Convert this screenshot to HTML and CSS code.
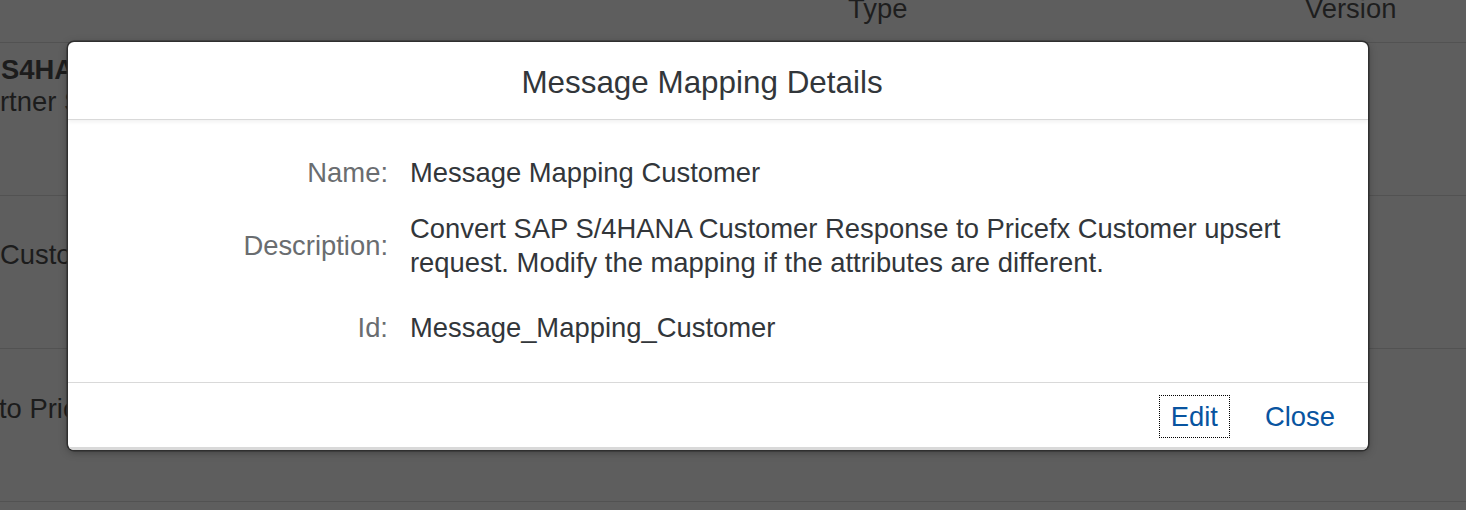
FILE: index.html
```html
<!DOCTYPE html>
<html lang="en">
<head>
<meta charset="utf-8">
<title>Message Mapping Details</title>
<link rel="stylesheet" href="styles.css">
</head>
<body>
<div class="page">
  <div class="table-head">
    <div class="th th-first"></div>
    <div class="th">Type</div>
    <div class="th">Version</div>
  </div>
  <div class="row row-1">
    <div class="cell">
      <div class="cell-title">S4HANA</div>
      <div class="cell-sub">rtner System</div>
    </div>
  </div>
  <div class="row row-2">
    <div class="cell">Customer</div>
  </div>
  <div class="row row-3">
    <div class="cell">to Pricefx</div>
  </div>
</div>

<div class="dialog" role="dialog" aria-labelledby="dlg-title">
  <header class="dialog-header">
    <h1 id="dlg-title" class="dialog-title">Message Mapping Details</h1>
  </header>
  <section class="dialog-body">
    <div class="form-row row-name">
      <div class="label">Name:</div>
      <div class="value">Message Mapping Customer</div>
    </div>
    <div class="form-row row-desc">
      <div class="label">Description:</div>
      <div class="value">Convert SAP S/4HANA Customer Response to Pricefx Customer upsert request. Modify the mapping if the attributes are different.</div>
    </div>
    <div class="form-row row-id">
      <div class="label">Id:</div>
      <div class="value">Message_Mapping_Customer</div>
    </div>
  </section>
  <footer class="dialog-footer">
    <button class="btn btn-focus" type="button">Edit</button>
    <button class="btn" type="button">Close</button>
  </footer>
</div>
</body>
</html>
```

FILE: styles.css
```css
html, body {
  margin: 0;
  padding: 0;
}
body {
  width: 1466px;
  height: 510px;
  overflow: hidden;
  background: #5e5e5e;
  font-family: "Liberation Sans", Arial, sans-serif;
  position: relative;
}
.page {
  color: #1c1c1c;
  font-size: 27.4px;
}
.table-head {
  display: grid;
  grid-template-columns: 848px 457px 1fr;
  height: 42px;
  border-bottom: 1px solid #525252;
  align-items: start;
  overflow: hidden;
}
.th {
  line-height: 32px;
  margin-top: -7px;
  color: #1e1e1e;
}
.row {
  border-bottom: 1px solid #525252;
  box-sizing: border-box;
  height: 153px;
}
.cell {
  line-height: 32px;
  padding-left: 1px;
}
.row-1 .cell { padding-top: 11px; }
.row-2 .cell { padding-top: 43px; margin-left: -1px; }
.row-3 .cell { padding-top: 44px; margin-left: -2px; }
.cell-title { font-weight: bold; }
.cell-sub { margin-left: -1px; }

.dialog {
  position: absolute;
  left: 68px;
  top: 42px;
  width: 1300px;
  background: #fff;
  border-radius: 6px;
  box-shadow: 0 0 0 1.5px #2f2f2f, 0 2px 8px rgba(0,0,0,0.35);
  overflow: hidden;
  color: #32363a;
}
.dialog-header {
  height: 78px;
  box-sizing: border-box;
  padding-top: 21px;
  padding-right: 32px;
  border-bottom: 1.5px solid #d9d9d9;
  box-shadow: 0 2px 4px rgba(0,0,0,0.06);
  text-align: center;
  position: relative;
}
.dialog-title {
  margin: 0;
  font-weight: normal;
  font-size: 31.4px;
  line-height: 40px;
  color: #32363a;
}
.dialog-body {
  padding: 36px 0 37px;
  font-size: 27.4px;
  line-height: 34px;
}
.form-row {
  display: grid;
  grid-template-columns: 320px 1fr;
  column-gap: 22px;
  align-items: center;
}
.row-desc { margin-top: 22px; }
.row-id { margin-top: 31px; }
.label {
  text-align: right;
  color: #6a6d70;
}
.value {
  color: #32363a;
  padding-right: 60px;
}
.dialog-footer {
  height: 68px;
  box-sizing: border-box;
  border-top: 1.5px solid #d9d9d9;
  border-bottom: 3px solid #d9d9d9;
  display: flex;
  justify-content: flex-end;
  align-items: center;
  gap: 23px;
  padding-top: 3px;
  padding-right: 21px;
}
.btn {
  font-family: inherit;
  font-size: 27.4px;
  line-height: 41px;
  color: #0854a0;
  background: transparent;
  border: 1px solid transparent;
  padding: 0 11px;
  margin: 0;
  cursor: pointer;
}
.btn-focus {
  border: 1px dotted #000;
}
```
